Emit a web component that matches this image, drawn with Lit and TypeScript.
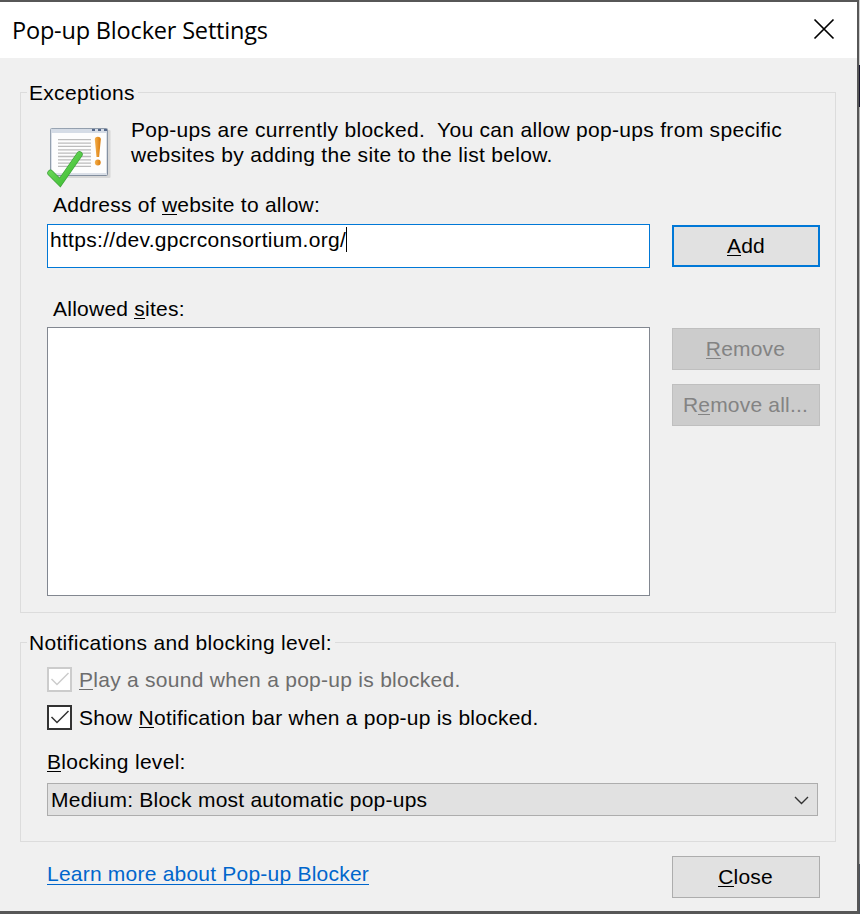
import { LitElement, html, css, svg } from "lit";
import { customElement } from "lit/decorators.js";

@customElement("app-root")
export class AppRoot extends LitElement {
  static styles = css`
    :host {
      display: block;
      width: 860px;
      height: 914px;
      overflow: hidden;
      font: 21px/25px "Liberation Sans", Arial, sans-serif;
      letter-spacing: 0.3px;
      color: #000;
    }
    * { box-sizing: border-box; }
    u { text-decoration: none; box-shadow: 0 1px 0 currentColor; display: inline-block; height: 22px; line-height: 25px; }
    .desktop {
      display: flex;
      width: 860px;
      height: 914px;
      background: linear-gradient(#cfcfcf 0 65px, #17152a 65px 107px, #b4b4b4 107px 864px, #4e535b 864px);
    }
    .window {
      width: 859px;
      height: 914px;
      display: flex;
      flex-direction: column;
      border: solid #575757;
      border-width: 2px 2px 3px 0;
      background: #f0f0f0;
    }
    .titlebar {
      height: 56px;
      flex: none;
      background: #fff;
      display: flex;
      justify-content: space-between;
      padding: 0 22px 0 12px;
    }
    .title {
      font: 23.5px/57px "Open Sans", "Noto Sans", sans-serif;
      letter-spacing: -0.18px;
      white-space: nowrap;
    }
    .x { margin-top: 16px; width: 22px; height: 22px; }
    .group {
      position: relative;
      border: 1px solid #dcdcdc;
      margin: 0 21px 0 20px;
      padding: 0 15px 0 26px;
      flex: none;
    }
    .exceptions { margin-top: 34px; height: 521px; }
    .notify { margin-top: 29px; height: 200px; }
    .legend {
      position: absolute;
      left: 6px;
      top: -13px;
      padding: 0 3px 0 2px;
      background: #f0f0f0;
      white-space: nowrap;
    }
    .intro { display: flex; padding-top: 24px; height: 99px; }
    .badge { width: 66px; height: 66px; margin: 8px 18px 0 0; flex: none; }
    .intro p { margin: 0; white-space: pre; letter-spacing: 0.31px; }
    .label { height: 25px; padding-left: 6px; white-space: nowrap; letter-spacing: 0.24px; }
    .row { display: flex; justify-content: space-between; }
    .field {
      width: 603px;
      height: 44px;
      border: 1px solid #0078d7;
      background: #fff;
      padding: 2px 0 0 2px;
      display: flex;
    }
    .caret { width: 1px; height: 25px; background: #000; }
    .address { margin-top: 7px; }
    .allowed { margin-top: 28px; }
    .sites { margin-top: 6px; }
    .list { width: 603px; height: 269px; border: 1px solid #828790; background: #fff; }
    .btn {
      width: 148px;
      height: 42px;
      border: 1px solid #adadad;
      background: #e1e1e1;
      text-align: center;
      line-height: 40px;
      white-space: nowrap;
      letter-spacing: 0.2px;
      padding-right: 1px;
    }
    .btn u { line-height: inherit; height: 29px; vertical-align: top; }
    .primary { border: 2px solid #0078d7; line-height: 38px; margin-top: 1px; padding-right: 0; }
    .primary u { height: 28px; }
    .off { color: #838383; background: #ccc; border-color: #bfbfbf; }
    .stack { display: flex; flex-direction: column; gap: 14px; padding-top: 1px; }
    .check { display: flex; gap: 7px; height: 25px; white-space: nowrap; letter-spacing: 0.27px; }
    .check.dim { color: #6d6d6d; margin-top: 24px; }
    .check.on { margin-top: 13px; letter-spacing: 0.24px; }
    .box { width: 25px; height: 25px; border: 2px solid #333; background: #fff; flex: none; color: #333; }
    .dim .box { border-color: #ccc; color: #ccc; }
    .box svg { display: block; }
    .level { margin-top: 19px; }
    .combo {
      margin-top: 9px;
      width: 771px;
      height: 33px;
      border: 1px solid #adadad;
      background: #e1e1e1;
      display: flex;
      justify-content: space-between;
      padding: 3px 8px 0 3px;
      white-space: nowrap;
      letter-spacing: 0.24px;
    }
    .combo svg { margin-top: 4px; }
    .footer { display: flex; justify-content: space-between; padding: 14px 37px 0 47px; }
    .link { margin-top: 5px; color: #06c; height: 24px; white-space: nowrap; letter-spacing: 0.22px; border-bottom: 1px solid #06c; }
  `;

  private tick() {
    return html`<svg width="21" height="21" viewBox="0 0 21 21">
      ${svg`<path d="M2.5 10 L8 15.5 L19.5 4" fill="none" stroke="currentColor" stroke-width="1.5" />`}
    </svg>`;
  }

  private badge() {
    return html`<svg class="badge" viewBox="0 0 66 66">
      <defs>
        <linearGradient id="frame" x1="0" y1="0" x2="1" y2="1">
          <stop offset="0" stop-color="#9aa6b4" /><stop offset="1" stop-color="#7f8b9b" />
        </linearGradient>
        <linearGradient id="bang" x1="0" y1="0" x2="1" y2="0">
          <stop offset="0" stop-color="#f5b04c" /><stop offset="1" stop-color="#d97a0a" />
        </linearGradient>
        <linearGradient id="green" x1="0" y1="0" x2="1" y2="1">
          <stop offset="0" stop-color="#7be066" /><stop offset="1" stop-color="#35b82c" />
        </linearGradient>
      </defs>
      <rect x="5" y="5" width="58.5" height="48" rx="1" fill="#000" opacity=".1" />
      <rect x="3.5" y="3.5" width="57" height="47" rx="1" fill="#dbe0e8" stroke="url(#frame)" />
      <rect x="4" y="4" width="56" height="4" fill="#d5dce6" />
      <path d="M45 5h3M51 5h3M57 5h3" stroke="#55688a" stroke-width="2" />
      <rect x="5" y="8" width="54" height="40" fill="#fdfdfd" />
      <path d="M11 14.7h33M11 18.1h33M11 21.4h33M11 24.8h33M11 28.2h33M11 31.5h33M11 34.8h33M11 38.2h33M11 41.3h33"
        stroke="#bcbcbc" stroke-width="1.3" />
      <path d="M47.8 14.5q0-2.8 3-2.8t3 2.8l-1.7 17.5h-2.6z" fill="url(#bang)" />
      <circle cx="50.8" cy="37.5" r="2.9" fill="url(#bang)" />
      <path d="M3.5 48L13 57.5L32.5 29.5" fill="none" stroke="#3f9f3a" stroke-width="6.4" stroke-linecap="round" />
      <path d="M3.5 48L13 57.5L32.5 29.5" fill="none" stroke="url(#green)" stroke-width="5" stroke-linecap="round" />
    </svg>`;
  }

  render() {
    return html`<div class="desktop"><main class="window">
      <header class="titlebar">
        <span class="title">Pop-up Blocker Settings</span>
        <svg class="x" viewBox="0 0 22 22"><path d="M1.5 1.5L20.5 20.5M20.5 1.5L1.5 20.5" stroke="#000" stroke-width="1.7" /></svg>
      </header>
      <section class="group exceptions">
        <span class="legend">Exceptions</span>
        <div class="intro">${this.badge()}<p>Pop-ups are currently blocked.  You can allow pop-ups from specific
websites by adding the site to the list below.</p></div>
        <div class="label">Address of <u>w</u>ebsite to allow:</div>
        <div class="row address">
          <div class="field"><span class="url">https://dev.gpcrconsortium.org/</span><i class="caret"></i></div>
          <div class="btn primary"><u>A</u>dd</div>
        </div>
        <div class="label allowed">Allowed <u>s</u>ites:</div>
        <div class="row sites">
          <div class="list"></div>
          <div class="stack">
            <div class="btn off"><u>R</u>emove</div>
            <div class="btn off">R<u>e</u>move all...</div>
          </div>
        </div>
      </section>
      <section class="group notify">
        <span class="legend">Notifications and blocking level:</span>
        <div class="check dim"><span class="box">${this.tick()}</span><span><u>P</u>lay a sound when a pop-up is blocked.</span></div>
        <div class="check on"><span class="box">${this.tick()}</span><span>Show <u>N</u>otification bar when a pop-up is blocked.</span></div>
        <div class="level"><u>B</u>locking level:</div>
        <div class="combo"><span>Medium: Block most automatic pop-ups</span>
          <svg width="15" height="18" viewBox="0 0 15 18"><path d="M1 6L7.5 12.5L14 6" fill="none" stroke="#333" stroke-width="1.4" /></svg>
        </div>
      </section>
      <footer class="footer">
        <span class="link">Learn more about Pop-up Blocker</span>
        <div class="btn"><u>C</u>lose</div>
      </footer>
    </main></div>`;
  }
}
